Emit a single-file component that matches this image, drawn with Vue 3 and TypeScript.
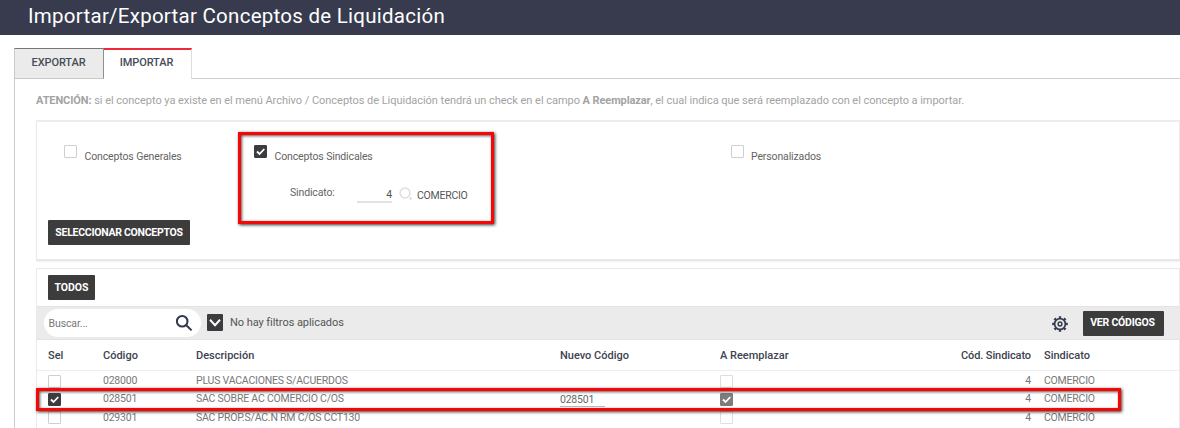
<script setup lang="ts">
interface Row {
  id: string
  name: string
  newCode: string
  checked: boolean
}

const rows: Row[] = [
  { id: '028000', name: 'PLUS VACACIONES S/ACUERDOS', newCode: '', checked: false },
  { id: '028501', name: 'SAC SOBRE AC COMERCIO C/OS', newCode: '028501', checked: true },
  { id: '029301', name: 'SAC PROP.S/AC.N RM C/OS CCT130', newCode: '', checked: false },
]
</script>

<template>
  <div class="page">
    <header class="title"><span>Importar/Exportar Conceptos de Liquidación</span></header>

    <nav class="tabs">
      <div class="tab exportar">EXPORTAR</div>
      <div class="tab importar">IMPORTAR</div>
      <div class="tab-fill"></div>
    </nav>

    <main class="content">
      <p class="notice">
        <b>ATENCIÓN:</b> si el concepto ya existe en el menú Archivo / Conceptos de Liquidación tendrá un check en el campo <b>A Reemplazar</b>, el cual indica que será reemplazado con el concepto a importar.
      </p>

      <section class="panel filters">
        <div class="option generales">
          <span class="check"></span>
          <span class="label">Conceptos Generales</span>
        </div>
        <div class="sindical">
          <div class="option">
            <span class="check on"><svg viewBox="0 0 13 13"><path d="M3 6.5 5.5 9 10.3 4" /></svg></span>
            <span class="label">Conceptos Sindicales</span>
          </div>
          <div class="union">
            <span class="union-label">Sindicato:</span>
            <span class="union-code">4</span>
            <svg class="lookup" viewBox="0 0 14 14"><circle cx="6" cy="6" r="4.9" /><path d="M10.6 10.6 12.4 12.4" /></svg>
            <span class="union-name">COMERCIO</span>
          </div>
          <div class="mark mark-union"></div>
        </div>
        <div class="option personal">
          <span class="check"></span>
          <span class="label">Personalizados</span>
        </div>
        <button class="btn select">SELECCIONAR CONCEPTOS</button>
      </section>

      <section class="panel grid-panel">
        <div class="actions"><button class="btn all">TODOS</button></div>
        <div class="toolbar">
          <div class="search">
            <span>Buscar...</span>
            <svg viewBox="0 0 18 18"><circle cx="7.2" cy="7.2" r="5.3" /><path d="M11 11 16.6 16.4" /></svg>
          </div>
          <span class="drop"><svg viewBox="0 0 16 17"><path d="M3 5.8 8 11.2 13 5.8" /></svg></span>
          <span class="no-filter">No hay filtros aplicados</span>
          <svg class="gear" viewBox="0 0 16 16">
            <circle class="ring" cx="8" cy="8" r="5.4" />
            <circle class="teeth" cx="8" cy="8" r="6.8" pathLength="80" />
            <circle class="hub" cx="8" cy="8" r="1.9" />
          </svg>
          <button class="btn codes">VER CÓDIGOS</button>
        </div>
        <div class="row head">
          <span>Sel</span><span>Código</span><span>Descripción</span><span>Nuevo Código</span>
          <span>A Reemplazar</span><span class="num">Cód. Sindicato</span><span>Sindicato</span>
        </div>
        <div class="rows">
          <div v-for="row in rows" :key="row.id" class="row item">
            <span class="check" :class="{ on: row.checked }"><svg v-if="row.checked" viewBox="0 0 13 13"><path d="M3 6.5 5.5 9 10.3 4" /></svg></span>
            <span class="code">{{ row.id }}</span>
            <span class="desc">{{ row.name }}</span>
            <span><span v-if="row.newCode" class="new-code">{{ row.newCode }}</span></span>
            <span class="check soft" :class="{ on: row.checked }"><svg v-if="row.checked" viewBox="0 0 13 13"><path d="M3 6.5 5.5 9 10.3 4" /></svg></span>
            <span class="num">4</span>
            <span class="comercio">COMERCIO</span>
          </div>
          <div class="mark mark-row"></div>
        </div>
      </section>
    </main>
  </div>
</template>

<style>
body { background: #fff; overflow: hidden; }
</style>

<style scoped>
* { box-sizing: border-box; }
.page {
  width: 1180px;
  height: 428px;
  overflow: hidden;
  background: #fff;
  font: 11px/14px Roboto, sans-serif;
  color: #636363;
  white-space: nowrap;
}
.title {
  height: 35px;
  padding: 3px 0 0 28px;
  background: #373b4d;
  color: #fff;
  font-size: 20.5px;
  line-height: 26px;
  letter-spacing: 0.26px;
}
.tabs { display: flex; height: 31px; margin: 13px 0 0 14px; }
.tab { padding-top: 7px; font-weight: 500; text-align: center; color: #454b58; letter-spacing: -0.1px; }
.exportar {
  width: 90px;
  padding-right: 1px;
  background: #ebebeb;
  border: 1px solid #c9c9c9;
  border-top-color: #777;
  border-right-color: #8f8f8f;
}
.importar { width: 88px; padding-top: 6px; padding-right: 2px; border-top: 2px solid #ee2a3a; border-right: 1px solid #ddd; }
.tab-fill { flex: 1; border-bottom: 1px solid #ccc; }
.content { height: 349px; margin-left: 14px; padding: 15px 0 0 21px; border-left: 1px solid #ccc; }
.notice { margin: 0; height: 26px; color: #a3a3a3; letter-spacing: -0.034px; }
.notice b { font-weight: 700; letter-spacing: -0.1px; }
.panel { width: 1144px; border: 1px solid #eaeaea; }
.filters {
  display: grid;
  grid-template-columns: 190px 476px 1fr;
  grid-template-rows: 75px 26px;
  height: 141px;
  padding: 23px 0 0 11px;
  border-top: 2px solid #ececec;
  border-bottom: 2px solid #e8e8e8;
  box-shadow: 0 1px 1px #f3f3f3;
}
.option { display: flex; gap: 7.5px; font-size: 10.5px; letter-spacing: -0.13px; }
.generales { padding-left: 16px; }
.personal { padding-left: 16.5px; }
.option .label { padding-top: 5px; }
.check {
  display: block;
  width: 13px;
  height: 13px;
  border: 1px solid #cfcfcf;
  border-radius: 1px;
  background: #fff;
  flex: none;
}
.check.on { background: #3c3c3f; border-color: #3c3c3f; }
.check.soft { border-color: #dedede; }
.check.soft.on { background: #7c7c7c; border-color: #7c7c7c; }
.check svg { display: block; width: 13px; height: 13px; margin: -1px; }
.check path { fill: none; stroke: #fff; stroke-width: 1.8; }
.sindical { position: relative; padding-left: 16px; }
.union { display: flex; margin: 21px 0 0 36px; font-size: 10.5px; letter-spacing: -0.25px; }
.union-label { width: 67px; padding-top: 1px; letter-spacing: -0.15px; }
.union-code { width: 35px; height: 18px; padding-top: 3px; border-bottom: 2px solid #e2e2e2; text-align: right; color: #555; }
.lookup { width: 14px; height: 14px; margin: 2px 4px 0 7px; fill: none; stroke: #dedede; stroke-width: 1.5; }
.lookup path { stroke-width: 2.2; }
.union-name { padding-top: 4px; color: #555; }
.mark { position: absolute; border: 3px solid #f80606; box-shadow: 1px 1px 3px #333, inset 1px 1px 3px #555; }
.mark-union { left: 0; top: -13px; width: 256px; height: 92px; }
.btn {
  border: 0;
  padding: 0;
  border-radius: 1px;
  background: #3c3c3c;
  color: #fff;
  font: 700 10.5px/24px Roboto, sans-serif;
  letter-spacing: -0.27px;
  height: 25px;
}
.select { width: 142px; grid-row: 2; }
.grid-panel { height: 180px; margin-top: 7px; border-bottom: 0; }
.actions { height: 37px; padding: 6px 0 0 11px; }
.all { width: 47px; letter-spacing: 0; }
.toolbar { display: flex; align-items: center; height: 34px; padding: 0 15px 0 7px; background: #ebebeb; border: solid #e3e3e3; border-width: 1px 0; }
.search { display: flex; align-items: center; justify-content: space-between; width: 157px; height: 28px; padding: 0 8px 0 4.5px; border-radius: 14px; background: #fff; font-size: 10.5px; letter-spacing: -0.1px; color: #777; }
.search span { padding-top: 2px; }
.search svg { width: 18px; height: 18px; fill: none; stroke: #30374d; stroke-width: 2; }
.drop { width: 16px; height: 17px; margin: -2px 7px 0 6px; background: #3c3c3f; border-radius: 1px; }
.drop svg { display: block; width: 16px; height: 17px; fill: none; stroke: #fff; stroke-width: 2; }
.no-filter { font-size: 11px; color: #555; letter-spacing: -0.06px; }
.gear { width: 16px; height: 16px; margin: 1px 15px 0 auto; fill: none; stroke: #363c52; }
.gear .ring { stroke-width: 1.8; }
.gear .teeth { stroke-width: 2.1; stroke-dasharray: 4.4 5.6; stroke-dashoffset: 2.2; }
.gear .hub { stroke-width: 1.5; }
.codes { width: 81px; padding-right: 2px; letter-spacing: -0.22px; }
.row {
  display: grid;
  grid-template-columns: 55px 93px 364px 160px 211px 100px 1fr;
  padding-left: 11px;
}
.num { text-align: right; padding-right: 0; }
.row > span:last-child { padding-left: 13px; }
.head { height: 31px; padding-top: 9px; border-bottom: 1px solid #eee; font-weight: 500; color: #3d4350; }
.head .num { letter-spacing: -0.1px; }
.rows { position: relative; padding-top: 1px; }
.item { height: 18.4px; padding-top: 2px; color: #777; font-size: 10.5px; letter-spacing: -0.22px; }
.item .check { margin-top: 0.5px; }
.new-code { display: block; width: 45px; height: 15px; padding-top: 1px; border-bottom: 1px solid #bbb; color: #666; }
.mark-row { left: -1px; top: 17px; width: 1085px; height: 23px; }
</style>
